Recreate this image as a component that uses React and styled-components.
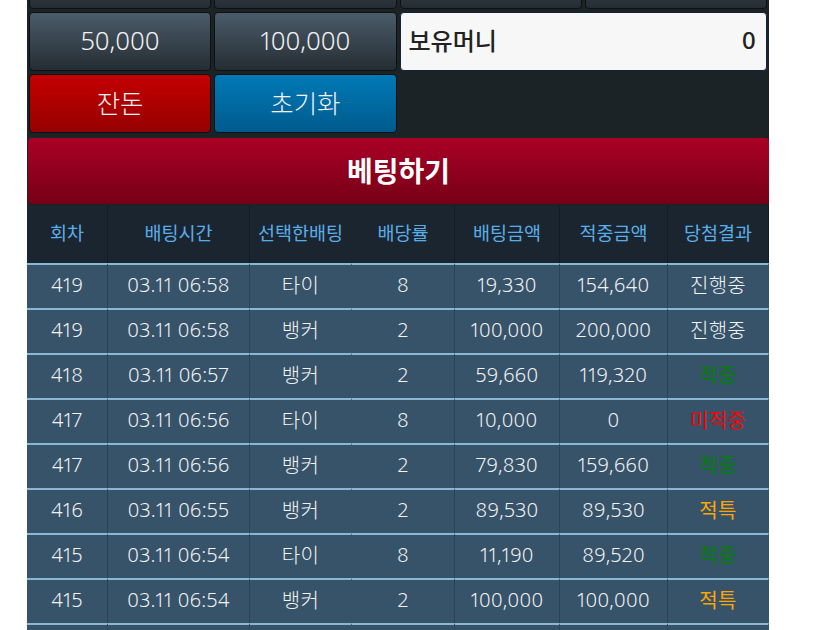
import React from "react";
import styled, { createGlobalStyle } from "styled-components";

const FONT = `"Noto Sans", "Noto Sans CJK KR", sans-serif`;

const Global = createGlobalStyle`
  html, body { margin: 0; padding: 0; background: #ffffff; }
  body { font-family: ${FONT}; font-variant-numeric: proportional-nums; }
`;

const Page = styled.div`
  margin: -50px 0 0 27px;
  width: 742px;
  background: #1c2327;
`;

const Pad = styled.div`
  display: grid;
  grid-template-columns: repeat(4, 1fr);
  gap: 3px;
  padding: 0 2px 4px 2px;
`;

const tones = {
  dark: ["#4b5b69", "#252d33"],
  red: ["#c40000", "#960000"],
  blue: ["#0079b6", "#005b8d"],
};

const PadButton = styled.button`
  height: 59px;
  box-sizing: border-box;
  border: 1px solid #0e1114;
  border-radius: 4px;
  background: linear-gradient(${(p) => tones[p.$tone][0]}, ${(p) => tones[p.$tone][1]});
  color: #f2f2f2;
  font-family: ${FONT};
  font-variant-numeric: proportional-nums;
  font-size: 25.5px;
  font-weight: 300;
  padding: 0 0 4px 0;
`;

const Wallet = styled.div`
  grid-column: span 2;
  height: 59px;
  box-sizing: border-box;
  border: 1px solid #13223f;
  border-radius: 4px;
  background: #f7f7f7;
  display: flex;
  align-items: center;
  justify-content: space-between;
  padding: 0 10px 5px 8px;
  color: #222;
  font-size: 24px;
  font-weight: 500;
`;

const Banner = styled.div`
  height: 66px;
  margin: 1px 0 2px 1px;
  border-radius: 4px;
  background: linear-gradient(#aa0026, #760016);
  display: flex;
  align-items: center;
  justify-content: center;
  color: #ffffff;
  font-size: 28px;
  font-weight: 700;
  padding-bottom: 3px;
  box-sizing: border-box;
`;

const Table = styled.div`
  display: grid;
  grid-template-columns: 81px 142px 102px 103px 105px 108px 1fr;
`;

const HeadCell = styled.div`
  height: 57px;
  background: #1b2530;
  color: #5aaee8;
  font-size: 18.5px;
  font-weight: 400;
  display: flex;
  align-items: center;
  justify-content: center;
  border-right: 1px solid ${(p) => (p.$noBorder ? "transparent" : "#141d26")};
  box-sizing: border-box;
  padding-bottom: 5px;
  &:last-child { border-right: none; }
`;

const Cell = styled.div`
  height: 45px;
  box-sizing: border-box;
  background: #37536a;
  border-top: 2px solid #8bb7d6;
  border-right: 1px solid ${(p) => (p.$noBorder ? "transparent" : "#2b4257")};
  color: ${(p) => p.$color || "#f2f2f2"};
  font-size: 20px;
  letter-spacing: 0.3px;
  font-weight: ${(p) => (p.$color ? 400 : 300)};
  display: flex;
  align-items: center;
  justify-content: center;
  padding-bottom: 4px;
`;

const resultColor = {
  "진행중": "#f2f2f2",
  "적중": "#008000",
  "미적중": "#ff0000",
  "적특": "#ffa500",
};

const heads = ["회차", "배팅시간", "선택한배팅", "배당률", "배팅금액", "적중금액", "당첨결과"];

const rows = [
  ["419", "03.11 06:58", "타이", "8", "19,330", "154,640", "진행중"],
  ["419", "03.11 06:58", "뱅커", "2", "100,000", "200,000", "진행중"],
  ["418", "03.11 06:57", "뱅커", "2", "59,660", "119,320", "적중"],
  ["417", "03.11 06:56", "타이", "8", "10,000", "0", "미적중"],
  ["417", "03.11 06:56", "뱅커", "2", "79,830", "159,660", "적중"],
  ["416", "03.11 06:55", "뱅커", "2", "89,530", "89,530", "적특"],
  ["415", "03.11 06:54", "타이", "8", "11,190", "89,520", "적중"],
  ["415", "03.11 06:54", "뱅커", "2", "100,000", "100,000", "적특"],
  ["", "", "", "", "", "", ""],
];

export default function App() {
  return (
    <>
      <Global />
      <Page>
        <Pad>
          <PadButton $tone="dark" aria-label="10,000" />
          <PadButton $tone="dark" aria-label="30,000" />
          <PadButton $tone="dark" aria-label="500,000" />
          <PadButton $tone="dark" aria-label="1,000,000" />
          <PadButton $tone="dark">50,000</PadButton>
          <PadButton $tone="dark">100,000</PadButton>
          <Wallet>
            <span>보유머니</span>
            <span>0</span>
          </Wallet>
          <PadButton $tone="red">잔돈</PadButton>
          <PadButton $tone="blue">초기화</PadButton>
        </Pad>
        <Banner>베팅하기</Banner>
        <Table>
          {heads.map((h, i) => (
            <HeadCell key={h} $noBorder={i === 2}>{h}</HeadCell>
          ))}
          {rows.map((r, ri) =>
            r.map((v, ci) => (
              <Cell
                key={ri + "-" + ci}
                $noBorder={ci === 2 || ci === 6}
                $color={ci === 6 && v && v !== "진행중" ? resultColor[v] : undefined}
              >
                {v}
              </Cell>
            ))
          )}
        </Table>
      </Page>
    </>
  );
}
